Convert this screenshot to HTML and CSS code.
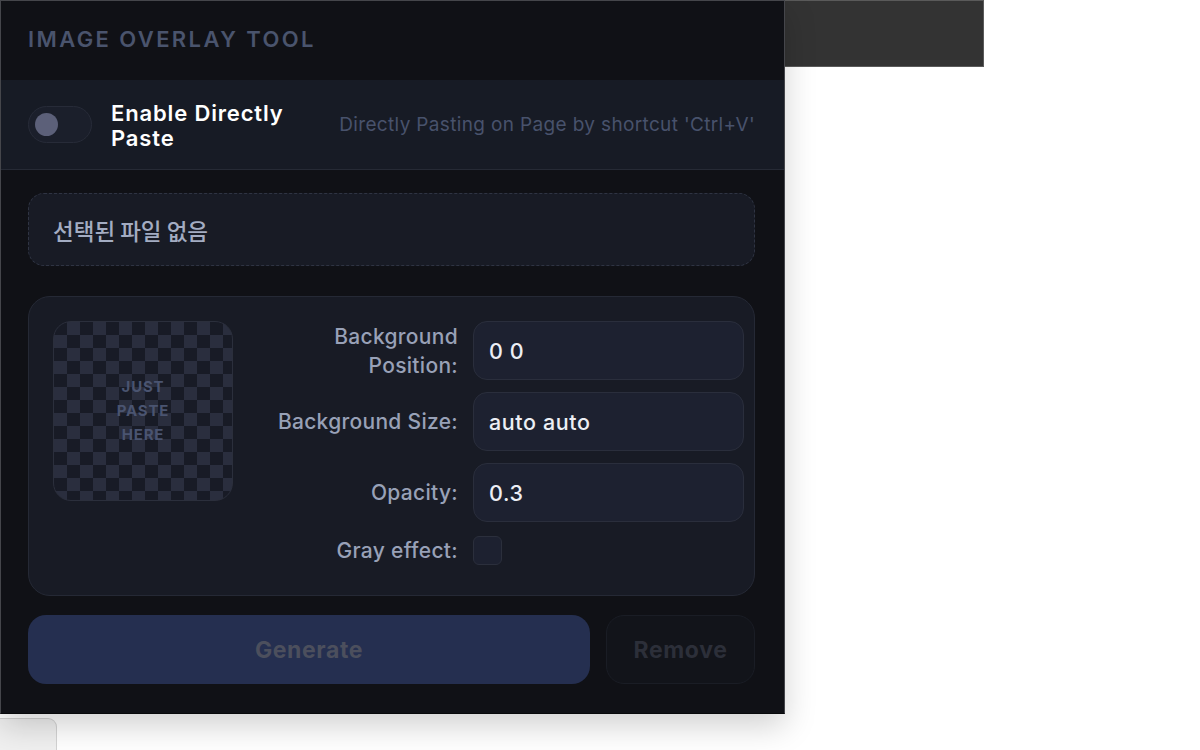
FILE: index.html
```html
<!DOCTYPE html>
<html lang="en">

<head>
    <meta charset="UTF-8">
    <meta name="viewport" content="width=device-width, initial-scale=1.0">
    <title>Image Overlay Tool</title>
    <link rel="stylesheet" href="styles.css">
</head>

<body>
    <div class="page">
        <div class="column">
            <div class="panel">
                <div class="panel-header">IMAGE OVERLAY TOOL</div>
                <div class="paste-row">
                    <label class="switch">
                        <span class="switch-knob"></span>
                    </label>
                    <div class="paste-title">Enable Directly Paste</div>
                    <div class="paste-hint">Directly Pasting on Page by shortcut 'Ctrl+V'</div>
                </div>
                <div class="panel-body">
                    <div class="file-box">선택된 파일 없음</div>
                    <div class="settings-card">
                        <div class="preview">
                            <span>JUST<br>PASTE<br>HERE</span>
                        </div>
                        <div class="settings-form">
                            <div class="form-label">Background Position:</div>
                            <div class="form-input">0 0</div>
                            <div class="form-label">Background Size:</div>
                            <div class="form-input">auto auto</div>
                            <div class="form-label">Opacity:</div>
                            <div class="form-input">0.3</div>
                            <div class="form-label">Gray effect:</div>
                            <div><span class="checkbox"></span></div>
                        </div>
                    </div>
                    <div class="actions">
                        <button class="btn btn-generate" disabled>Generate</button>
                        <button class="btn btn-remove" disabled>Remove</button>
                    </div>
                </div>
            </div>
            <div class="tab"></div>
        </div>
        <div class="top-strip"></div>
    </div>
</body>

</html>
```

FILE: styles.css
```css
* {
    margin: 0;
    padding: 0;
    box-sizing: border-box;
}

body {
    font-family: Inter, "Noto Sans", "Noto Sans CJK KR", sans-serif;
    background-color: #fff;
    overflow: hidden;
}

.page {
    display: flex;
    align-items: flex-start;
}

.column {
    width: 785px;
    display: flex;
    flex-direction: column;
}

.panel {
    position: relative;
    z-index: 1;
    background-color: #101116;
    border: 1px solid #45464b;
    border-bottom-color: #08090b;
    height: 714px;
    box-shadow: 0 12px 30px rgba(0, 0, 0, 0.18);
}

.panel-header {
    height: 79px;
    padding: 0 0 3px 27px;
    display: flex;
    align-items: center;
    font-size: 22px;
    font-weight: 600;
    letter-spacing: 2.4px;
    color: #4a546d;
}

.paste-row {
    height: 90px;
    background-color: #171b25;
    border-bottom: 1px solid #262a35;
    padding: 0 29px 0 27px;
    display: flex;
    align-items: center;
}

.switch {
    width: 64px;
    height: 37px;
    border-radius: 19px;
    background-color: #1b1f2b;
    border: 1px solid #272b38;
    display: flex;
    align-items: center;
    padding-left: 6px;
    margin-right: 19px;
}

.switch-knob {
    width: 23px;
    height: 23px;
    border-radius: 50%;
    background-color: #5c6079;
}

.paste-title {
    width: 200px;
    padding-top: 3px;
    font-size: 22px;
    font-weight: 600;
    letter-spacing: 0.85px;
    line-height: 25px;
    color: #ffffff;
}

.paste-hint {
    margin-left: auto;
    font-size: 19px;
    letter-spacing: 0.35px;
    color: #48526c;
}

.panel-body {
    padding: 23px 29px 28px 27px;
}

.file-box {
    height: 73px;
    border: 1px dashed #2f3443;
    border-radius: 16px;
    background-color: #181b25;
    display: flex;
    align-items: center;
    padding-left: 24px;
    font-family: "Noto Sans CJK KR", sans-serif;
    font-size: 22.5px;
    font-weight: 500;
    color: #a3acc2;
}

.settings-card {
    margin-top: 30px;
    height: 300px;
    border: 1px solid #252935;
    border-radius: 22px;
    background-color: #181b25;
    padding: 24px 10px 0 24px;
    display: flex;
    gap: 30px;
}

.preview {
    flex: 0 0 180px;
    height: 180px;
    border: 1px solid #2b2f3c;
    border-radius: 18px;
    background-color: #181b26;
    background-image:
        linear-gradient(45deg, #2a2e3e 25%, transparent 25%, transparent 75%, #2a2e3e 75%),
        linear-gradient(45deg, #2a2e3e 25%, transparent 25%, transparent 75%, #2a2e3e 75%);
    background-size: 26px 26px;
    background-position: 0 0, 13px 13px;
    display: flex;
    align-items: center;
    justify-content: center;
    text-align: center;
    font-size: 15px;
    font-weight: 700;
    letter-spacing: 0.8px;
    line-height: 24px;
    color: #4a5470;
}

.settings-form {
    flex: 1;
    display: grid;
    grid-template-columns: 1fr 271px;
    grid-auto-rows: 59px;
    column-gap: 15px;
    row-gap: 12px;
    align-items: center;
}

.settings-form > :nth-last-child(-n+2) {
    align-self: start;
    margin-top: 2px;
}

.form-label {
    text-align: right;
    font-size: 21px;
    font-weight: 500;
    letter-spacing: 0.3px;
    line-height: 29px;
    color: #98a1b7;
    padding-left: 14px;
}

.form-input {
    height: 59px;
    border: 1px solid #2a2e3c;
    border-radius: 14px;
    background-color: #1d2130;
    display: flex;
    align-items: center;
    padding-left: 15px;
    font-size: 21.5px;
    font-weight: 500;
    letter-spacing: 0.6px;
    color: #eceef4;
}

.checkbox {
    display: block;
    width: 29px;
    height: 29px;
    border: 1px solid #2b2f3c;
    border-radius: 6px;
    background-color: #1d2130;
}

.actions {
    margin-top: 19px;
    display: flex;
    gap: 16px;
}

.btn {
    height: 69px;
    border-radius: 18px;
    font-family: Inter, "Noto Sans", sans-serif;
    font-size: 23px;
    font-weight: 700;
    letter-spacing: 0.6px;
}

.btn-generate {
    flex: 1;
    border: none;
    background-color: #252f50;
    color: #4c4f5d;
}

.btn-remove {
    width: 149px;
    border: 1px solid #1a1d25;
    background-color: #12141a;
    color: #2c2f39;
}

.tab {
    margin-top: 4px;
    width: 57px;
    height: 40px;
    background-color: #f0f0f0;
    border: 1px solid #d3d3d3;
    border-left: none;
    border-radius: 0 9px 0 0;
}

.top-strip {
    width: 199px;
    height: 67px;
    background-color: #333333;
    border: 1px solid #5a5a5a;
    border-left: none;
}
```
